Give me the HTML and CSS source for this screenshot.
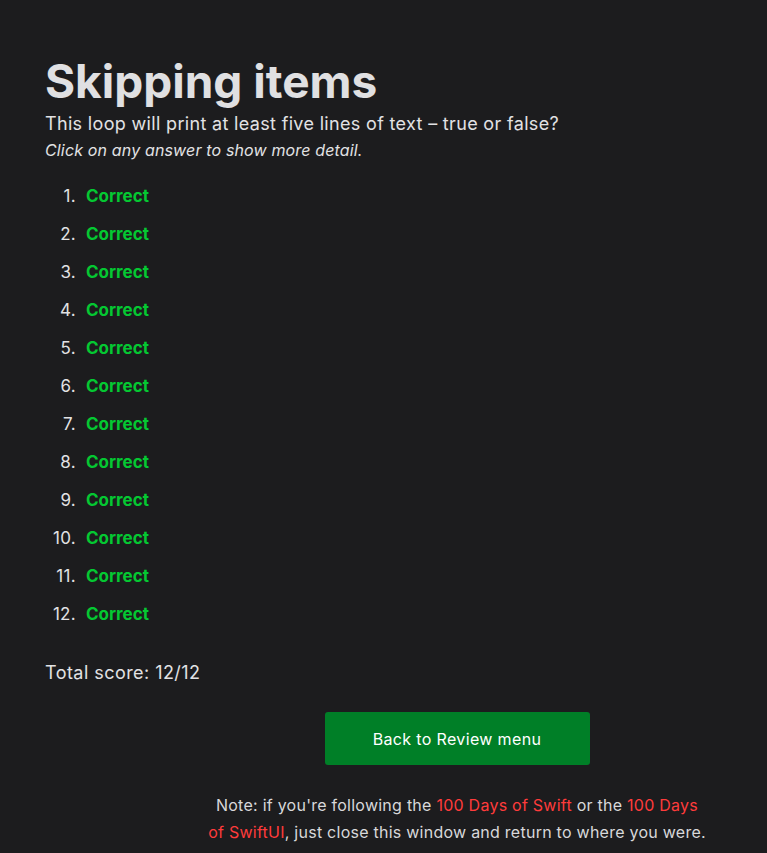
FILE: index.html
```html
<!DOCTYPE html>
<html lang="en">
<head>
<meta charset="utf-8">
<title>Skipping items</title>
<link rel="stylesheet" href="styles.css">
</head>
<body>
<main class="page">
  <h1 class="title">Skipping items</h1>
  <p class="question">This loop will print at least five lines of text – true or false?</p>
  <p class="hint">Click on any answer to show more detail.</p>
  <ol class="answers">
    <li><span class="correct">Correct</span></li>
    <li><span class="correct">Correct</span></li>
    <li><span class="correct">Correct</span></li>
    <li><span class="correct">Correct</span></li>
    <li><span class="correct">Correct</span></li>
    <li><span class="correct">Correct</span></li>
    <li><span class="correct">Correct</span></li>
    <li><span class="correct">Correct</span></li>
    <li><span class="correct">Correct</span></li>
    <li><span class="correct">Correct</span></li>
    <li><span class="correct">Correct</span></li>
    <li><span class="correct">Correct</span></li>
  </ol>
  <p class="score">Total score: 12/12</p>
  <div class="footer">
    <a class="button" href="#">Back to Review menu</a>
    <p class="note">Note: if you're following the <a href="#">100 Days of Swift</a> or the <a href="#">100 Days of SwiftUI</a>, just close this window and return to where you were.</p>
  </div>
</main>
</body>
</html>
```
FILE: styles.css
```css
html, body {
  margin: 0;
  padding: 0;
  background: #1c1c1e;
}
body {
  font-family: Inter, "Noto Sans", sans-serif;
  color: #e2e2e4;
  overflow: hidden;
}
.page {
  padding: 52px 0 0 45px;
}
.title {
  margin: 0;
  font-size: 46px;
  font-weight: 700;
  line-height: 58px;
  letter-spacing: 0;
  color: #e0e0e2;
}
.question {
  margin: 0;
  font-size: 18px;
  line-height: 28px;
  letter-spacing: 0.33px;
}
.hint {
  margin: 0;
  font-size: 16px;
  font-style: italic;
  line-height: 24px;
  letter-spacing: 0.15px;
}
.answers {
  margin: 15px 0 0 0;
  padding: 0;
  list-style: none;
  counter-reset: item;
}
.answers li {
  display: flex;
  align-items: baseline;
  gap: 10px;
  font-size: 17px;
  line-height: 38px;
  counter-increment: item;
}
.answers li::before {
  content: counter(item) ".";
  width: 31px;
  text-align: right;
  color: #e2e2e4;
  font-weight: 400;
  letter-spacing: 0.3px;
}
.correct {
  color: #04c832;
  font-weight: 700;
}
.score {
  margin: 26px 0 0 0;
  font-size: 18px;
  line-height: 28px;
  letter-spacing: 0.45px;
}
.footer {
  margin: 25px 0 0 102px;
  width: 620px;
  display: flex;
  flex-direction: column;
  align-items: center;
}
.button {
  display: flex;
  align-items: center;
  justify-content: center;
  width: 265px;
  height: 53px;
  background: #007f27;
  border-radius: 3px;
  color: #ffffff;
  font-size: 16px;
  letter-spacing: 0.35px;
  text-decoration: none;
}
.note {
  margin: 27px 0 0 0;
  width: 500px;
  text-align: center;
  font-size: 16px;
  line-height: 27px;
  letter-spacing: 0.25px;
  color: #d8d8da;
}
.note a {
  color: #ff3b3b;
  text-decoration: none;
}
```
